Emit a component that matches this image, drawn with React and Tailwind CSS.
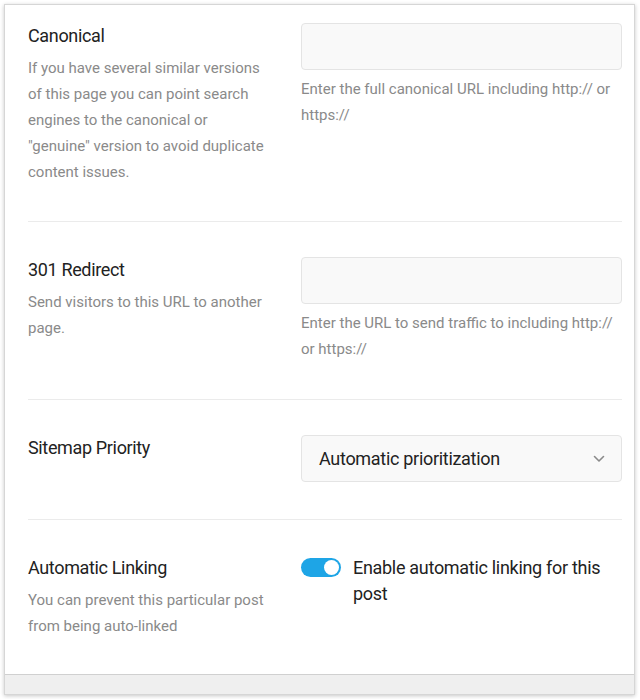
function Field({ title, desc, children, first, last }) {
  return (
    <div
      className={
        "flex " +
        (first ? "pt-[18px] pb-[36px] border-b border-[#ebebeb]" : last ? "pt-[35px]" : "pt-[35px] pb-[37px] border-b border-[#ebebeb]")
      }
    >
      <div className="w-[273px] shrink-0">
        <div className="w-[242px]">
          <h3 className="text-[18px] leading-[26px] font-normal tracking-[-0.35px] text-[#222]">{title}</h3>
          {desc && (
            <p className="mt-[6px] text-[15px] leading-[26px] text-[#8a8a8a]">{desc}</p>
          )}
        </div>
      </div>
      <div className="flex-1">{children}</div>
    </div>
  );
}

function TextInput({ help }) {
  return (
    <div>
      <div className="h-[47px] rounded-[4px] border border-[#e4e4e4] bg-[#f9f9f9]" />
      <p className="mt-[6px] text-[15px] leading-[26px] text-[#8a8a8a]">{help}</p>
    </div>
  );
}

export default function App() {
  return (
    <div className="p-[4px] bg-white font-['Roboto',sans-serif]">
      <div className="w-[631px] h-[691px] flex flex-col border border-[#d6d6d6] bg-white shadow-[0_1px_4px_rgba(0,0,0,0.22)]">
        <div className="flex-1 pl-[23px] pr-[12px]">
          <Field
            first
            title="Canonical"
            desc={'If you have several similar versions of this page you can point search engines to the canonical or "genuine" version to avoid duplicate content issues.'}
          >
            <TextInput help="Enter the full canonical URL including http:// or https://" />
          </Field>

          <Field title="301 Redirect" desc="Send visitors to this URL to another page.">
            <TextInput help="Enter the URL to send traffic to including http:// or https://" />
          </Field>

          <Field title="Sitemap Priority">
            <div className="h-[47px] rounded-[4px] border border-[#e4e4e4] bg-[#f9f9f9] flex items-center justify-between pl-[17px] pr-[16px]">
              <span className="text-[18px] tracking-[-0.3px] text-[#222]">Automatic prioritization</span>
              <svg width="12" height="8" viewBox="0 0 12 8" fill="none">
                <path d="M1.5 1.5L6 6L10.5 1.5" stroke="#8a8a8a" strokeWidth="1.6" strokeLinecap="round" strokeLinejoin="round" />
              </svg>
            </div>
          </Field>

          <Field
            last
            title="Automatic Linking"
            desc="You can prevent this particular post from being auto-linked"
          >
            <div className="flex items-start gap-[12px]">
              <div className="mt-[3px] w-[40px] h-[19px] rounded-full bg-[#1ea5e6] flex items-center justify-end pr-[2px] shrink-0">
                <div className="w-[15px] h-[15px] rounded-full bg-white" />
              </div>
              <span className="text-[18px] leading-[26px] tracking-[-0.3px] text-[#222]">
                Enable automatic linking for this post
              </span>
            </div>
          </Field>
        </div>
        <div className="h-[20px] bg-[#efefef] border-t border-[#d0d0d0]" />
      </div>
    </div>
  );
}
